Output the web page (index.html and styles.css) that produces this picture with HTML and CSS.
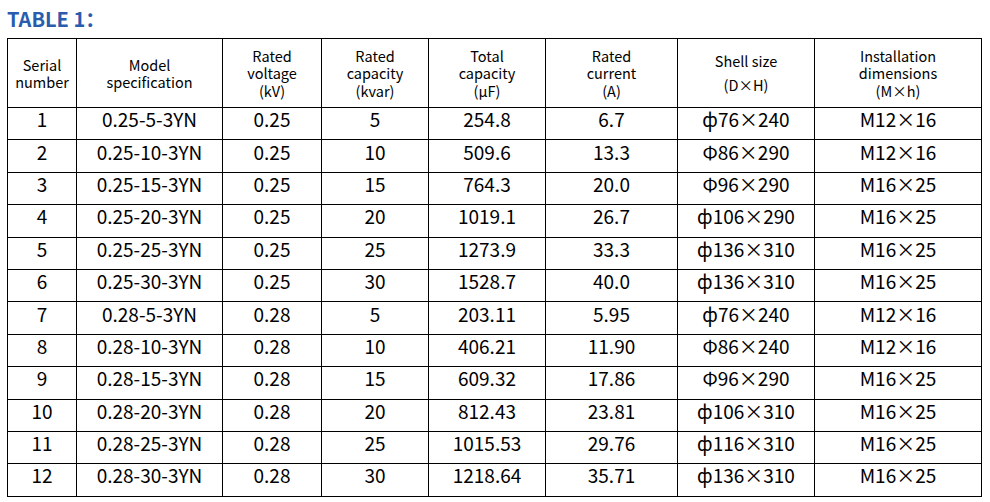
FILE: index.html
```html
<!DOCTYPE html>
<html lang="en">
<head>
    <meta charset="UTF-8">
    <meta name="viewport" content="width=device-width, initial-scale=1.0">
    <link rel="stylesheet" href="styles.css">
    <title>Table 1</title>
</head>
<body>

    <h2 class="title">TABLE 1：</h2>

    <table class="spec">
        <colgroup>
            <col class="c1"><col class="c2"><col class="c3"><col class="c4">
            <col class="c5"><col class="c6"><col class="c7"><col class="c8">
        </colgroup>
        <thead>
            <tr>
                <th>Serial<br>number</th>
                <th>Model<br>specification</th>
                <th>Rated<br>voltage<br>(kV)</th>
                <th>Rated<br>capacity<br>(kvar)</th>
                <th>Total<br>capacity<br>(μF)</th>
                <th>Rated<br>current<br>(A)</th>
                <th class="wide">Shell size<br>(D×H)</th>
                <th>Installation<br>dimensions<br>(M×h)</th>
            </tr>
        </thead>
        <tbody>
            <tr><td>1</td><td>0.25-5-3YN</td><td>0.25</td><td>5</td><td>254.8</td><td>6.7</td><td>ф76×240</td><td>M12×16</td></tr>
            <tr><td>2</td><td>0.25-10-3YN</td><td>0.25</td><td>10</td><td>509.6</td><td>13.3</td><td>Φ86×290</td><td>M12×16</td></tr>
            <tr><td>3</td><td>0.25-15-3YN</td><td>0.25</td><td>15</td><td>764.3</td><td>20.0</td><td>Φ96×290</td><td>M16×25</td></tr>
            <tr><td>4</td><td>0.25-20-3YN</td><td>0.25</td><td>20</td><td>1019.1</td><td>26.7</td><td>ф106×290</td><td>M16×25</td></tr>
            <tr><td>5</td><td>0.25-25-3YN</td><td>0.25</td><td>25</td><td>1273.9</td><td>33.3</td><td>ф136×310</td><td>M16×25</td></tr>
            <tr><td>6</td><td>0.25-30-3YN</td><td>0.25</td><td>30</td><td>1528.7</td><td>40.0</td><td>ф136×310</td><td>M16×25</td></tr>
            <tr><td>7</td><td>0.28-5-3YN</td><td>0.28</td><td>5</td><td>203.11</td><td>5.95</td><td>ф76×240</td><td>M12×16</td></tr>
            <tr><td>8</td><td>0.28-10-3YN</td><td>0.28</td><td>10</td><td>406.21</td><td>11.90</td><td>Φ86×240</td><td>M12×16</td></tr>
            <tr><td>9</td><td>0.28-15-3YN</td><td>0.28</td><td>15</td><td>609.32</td><td>17.86</td><td>Φ96×290</td><td>M16×25</td></tr>
            <tr><td>10</td><td>0.28-20-3YN</td><td>0.28</td><td>20</td><td>812.43</td><td>23.81</td><td>ф106×310</td><td>M16×25</td></tr>
            <tr><td>11</td><td>0.28-25-3YN</td><td>0.28</td><td>25</td><td>1015.53</td><td>29.76</td><td>ф116×310</td><td>M16×25</td></tr>
            <tr><td>12</td><td>0.28-30-3YN</td><td>0.28</td><td>30</td><td>1218.64</td><td>35.71</td><td>ф136×310</td><td>M16×25</td></tr>
        </tbody>
    </table>

</body>
</html>
```

FILE: styles.css
```css
body {
    font-family: "Noto Sans CJK SC", "Noto Sans", sans-serif;
    margin: 0;
    padding: 6px 9px 0 7px;
    color: #000;
    background: #fff;
}

.title {
    margin: 0 0 6px 0;
    font-size: 20px;
    line-height: 26px;
    font-weight: bold;
    color: #2a5cae;
}

.spec {
    width: 974px;
    border-collapse: collapse;
    table-layout: fixed;
}

.c1 { width: 69px; }
.c2 { width: 146px; }
.c3 { width: 99px; }
.c4 { width: 107px; }
.c5 { width: 117px; }
.c6 { width: 132px; }
.c7 { width: 137px; }
.c8 { width: 167px; }

.spec th,
.spec td {
    border: 1px solid #000;
    text-align: center;
    padding: 0;
}

.spec th {
    height: 68px;
    font-size: 14.5px;
    font-weight: normal;
    line-height: 17.5px;
}

.spec th.wide {
    line-height: 24px;
}

.spec td {
    height: 22.4px;
    font-size: 19px;
    line-height: 22px;
    padding-bottom: 9px;
}
```
